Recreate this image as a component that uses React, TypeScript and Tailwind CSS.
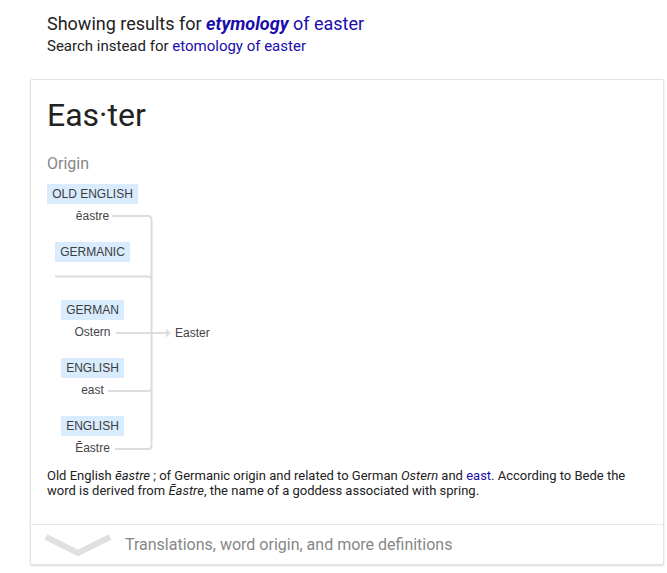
import React from 'react'

// One node of the etymology chart: language tag with the word below it
const Node = ({ lang, word }: { lang: string; word?: string }) => (
    <div className="h-[58px] flex flex-col items-center">
        <span className="h-[20px] leading-[20px] px-[5px] bg-[#d9ecfd] text-[12px] text-[#3c3c3c] font-['Liberation_Sans',Arial,sans-serif]">
            {lang}
        </span>
        {word && (
            <span className="mt-[5px] leading-[14px] text-[12px] text-[#444] font-['Liberation_Sans',Arial,sans-serif]">
                {word}
            </span>
        )}
    </div>
)

const EtymologyChart = () => (
    <div className="relative h-[272px] w-[200px]">
        {/* connector lines */}
        <svg className="absolute left-0 top-0" width="200" height="272" viewBox="0 0 200 272" fill="none">
            <path d="M65 32 H101 Q104.5 32 104.5 35.5 V261.5 Q104.5 265 101 265 H68" stroke="#dcdcdc" strokeWidth="2" />
            <path d="M8 92.5 H101 Q104.5 92.5 104.5 96" stroke="#dcdcdc" strokeWidth="2" />
            <path d="M61 207 H101 Q104.5 207 104.5 203.5" stroke="#dcdcdc" strokeWidth="2" />
            <path d="M69 149 H119" stroke="#dedede" strokeWidth="2" />
            <path d="M119 144.5 L124 149 L119 153.5 Z" fill="#dedede" />
        </svg>

        <div className="w-[91px] flex flex-col">
            <Node lang="OLD ENGLISH" word="ēastre" />
            <Node lang="GERMANIC" />
            <Node lang="GERMAN" word="Ostern" />
            <Node lang="ENGLISH" word="east" />
            <Node lang="ENGLISH" word="Ēastre" />
        </div>

        <span className="absolute left-[128px] top-[142px] leading-[14px] text-[12px] text-[#444] font-['Liberation_Sans',Arial,sans-serif]">
            Easter
        </span>
    </div>
)

const App = () => {
    return (
        <div className="min-h-[573px] w-[667px] bg-white font-['Roboto',Arial,sans-serif] text-[#222]">
            {/* spelling suggestion */}
            <div className="pl-[47px] pt-[12px]">
                <p className="text-[18px] leading-[24px]">
                    Showing results for{' '}
                    <a className="text-[#1a0dab] font-bold italic">etymology</a>
                    <span className="text-[#1a0dab]"> of easter</span>
                </p>
                <p className="text-[15px] leading-[20px]">
                    Search instead for <a className="text-[#1a0dab]">etomology of easter</a>
                </p>
            </div>

            {/* dictionary card */}
            <div className="mt-[23px] ml-[30px] w-[634px] rounded-[2px] border border-[#e4e4e4] shadow-[0_1px_2px_rgba(0,0,0,0.15)] bg-white">
                <div className="pl-[16px] pr-[16px] pt-[15px]">
                    <h1 className="text-[32px] leading-[40px] text-[#222]">Eas·ter</h1>
                    <h2 className="mt-[17px] text-[16px] leading-[24px] text-[#878787]">Origin</h2>
                    <div className="mt-[8px]">
                        <EtymologyChart />
                    </div>
                    <p className="mt-[12px] pb-[26px] text-[13px] leading-[15px] text-[#222]">
                        Old English <i>ēastre</i> ; of Germanic origin and related to German <i>Ostern</i> and{' '}
                        <a className="text-[#1a0dab]">east</a>. According to Bede the word is derived from{' '}
                        <i>Ēastre</i>, the name of a goddess associated with spring.
                    </p>
                </div>

                {/* expand footer */}
                <div className="h-[40px] border-t border-[#e8e8e8] flex items-center">
                    <svg className="ml-[13px]" width="68" height="24" viewBox="0 0 68 24" fill="none">
                        <path d="M2 4 L34 20 L66 4" stroke="#e0e0e0" strokeWidth="6" />
                    </svg>
                    <span className="ml-[13px] text-[16px] text-[#878787]">
                        Translations, word origin, and more definitions
                    </span>
                </div>
            </div>
        </div>
    )
}

export default App
